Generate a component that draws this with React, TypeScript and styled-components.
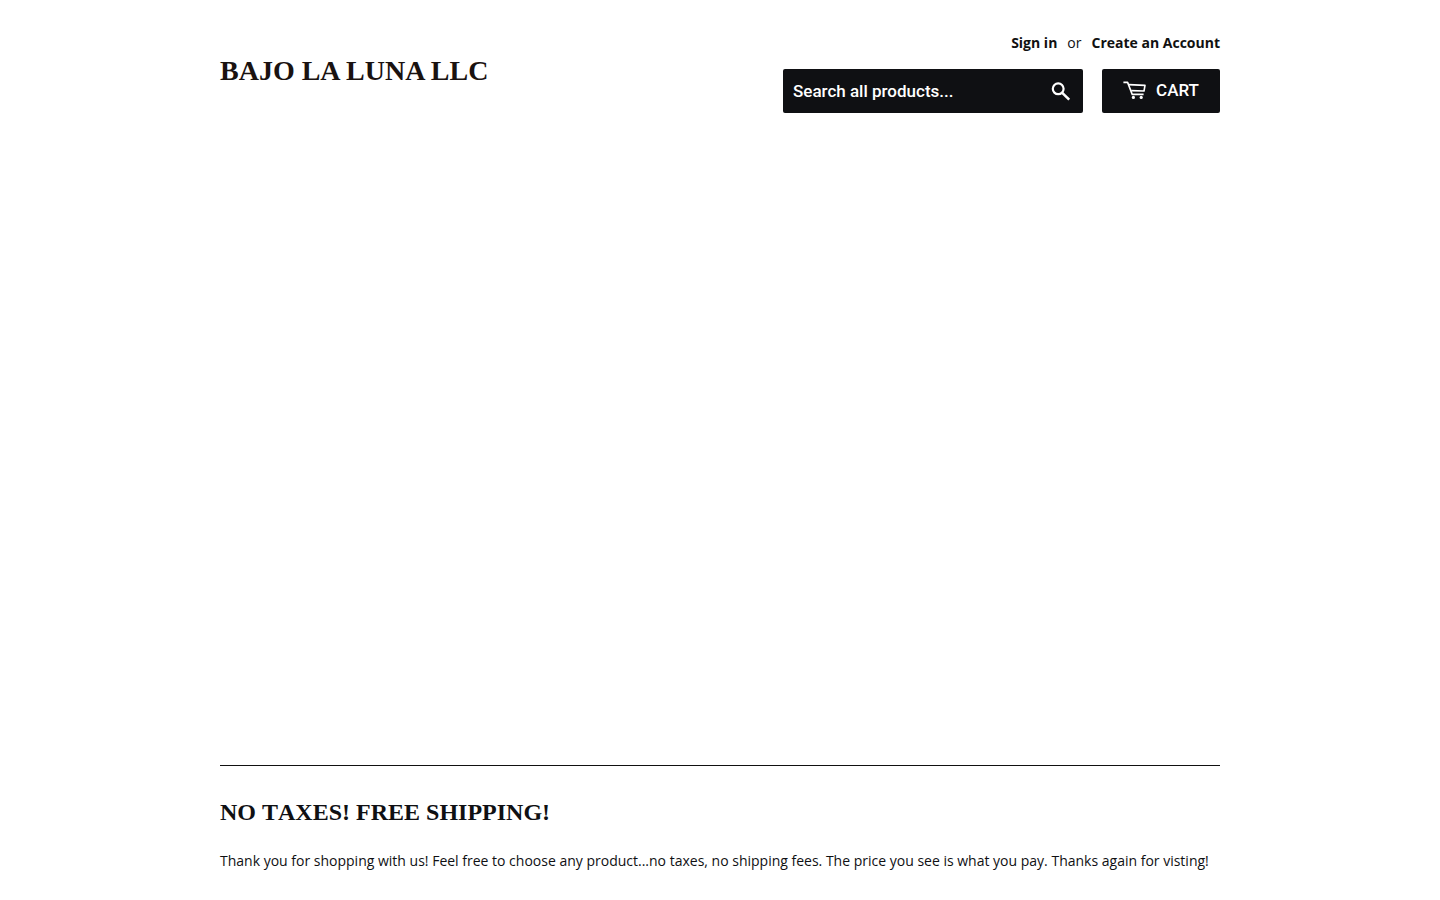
import React from "react";
import styled, { createGlobalStyle } from "styled-components";

const GlobalStyle = createGlobalStyle`
  *, *::before, *::after { box-sizing: border-box; }
  body {
    margin: 0;
    background: #fff;
    color: #0f1013;
    font-family: "Open Sans", "Noto Sans", sans-serif;
    font-size: 14px;
    line-height: 22px;
  }
`;

const Page = styled.div`
  max-width: 1040px;
  margin: 0 auto;
  padding: 0 20px;
`;

const Header = styled.header`
  display: flex;
  flex-wrap: wrap;
  align-items: center;
  justify-content: space-between;
  gap: 16px;
  padding: 30px 0;
`;

const SiteName = styled.h1`
  margin: 0;
  padding-bottom: 2px;
  font: bold 28px/32px "Liberation Serif", serif;
  text-transform: uppercase;

  a {
    color: #1a1210;
    text-decoration: none;
  }
`;

const Tools = styled.div`
  display: flex;
  flex-direction: column;
  align-items: flex-end;
  gap: 14px;
`;

const Account = styled.nav`
  display: flex;
  gap: 10px;
  height: 25px;
  line-height: 26px;
`;

const AccountLink = styled.a`
  color: #111;
  font-weight: 700;
  text-decoration: none;
`;

const Actions = styled.div`
  display: flex;
  gap: 19px;
`;

const SearchForm = styled.form`
  display: flex;
  width: 300px;
  height: 44px;
  border-radius: 2px;
  background: #0f1013;
`;

const SearchInput = styled.input`
  flex: 1;
  min-width: 0;
  padding: 0 10px;
  border: 0;
  background: transparent;
  color: #fff;
  font: 500 17px/20px Roboto, sans-serif;

  &::placeholder {
    color: #fff;
    opacity: 1;
  }
`;

const SearchButton = styled.button`
  display: flex;
  align-items: center;
  justify-content: center;
  width: 44px;
  padding: 0;
  border: 0;
  background: transparent;
  color: #fff;
  cursor: pointer;
`;

const CartLink = styled.a`
  display: flex;
  align-items: center;
  justify-content: center;
  gap: 9px;
  width: 118px;
  height: 44px;
  padding-bottom: 2px;
  border-radius: 2px;
  background: #0f1013;
  color: #fff;
  font: 500 17px/20px Roboto, sans-serif;
  text-decoration: none;
`;

const Slideshow = styled.section`
  min-height: 622px;
`;

const Divider = styled.hr`
  margin: 0;
  border: 0;
  border-top: 1px solid #111;
`;

const Message = styled.section`
  padding: 30px 0;
`;

const MessageTitle = styled.h2`
  margin: 0 0 22px;
  font: bold 24px/32px "Liberation Serif", serif;
  font-kerning: none;
`;

const MessageText = styled.p`
  margin: 0;
`;

const SearchIcon = () => (
  <svg width="20" height="20" viewBox="0 0 20 20" fill="none" stroke="currentColor" aria-hidden="true">
    <circle cx="7.2" cy="7.8" r="5.4" strokeWidth="2.2" />
    <path d="M11 11.6 18.2 18.6" strokeWidth="2.6" />
  </svg>
);

const CartIcon = () => (
  <svg width="24" height="20" viewBox="0 0 24 20" fill="none" stroke="currentColor" aria-hidden="true">
    <path d="M.4 2.4h4.2l4.6 12h11.4" strokeWidth="1.6" strokeLinejoin="round" />
    <path d="M5.6 4.6 22 5.4 21 11 8.2 10.6" strokeWidth="1.6" strokeLinejoin="round" />
    <circle cx="10.4" cy="17.4" r="1.6" fill="currentColor" stroke="none" />
    <circle cx="18.2" cy="17.4" r="1.6" fill="currentColor" stroke="none" />
  </svg>
);

export default function App() {
  return (
    <>
      <GlobalStyle />
      <Page>
        <Header>
          <SiteName>
            <a href="#home">Bajo La Luna LLC</a>
          </SiteName>
          <Tools>
            <Account aria-label="Account">
              <AccountLink href="#login">Sign in</AccountLink>
              <span>or</span>
              <AccountLink href="#register">Create an Account</AccountLink>
            </Account>
            <Actions>
              <SearchForm role="search">
                <SearchInput type="search" aria-label="Search all products" placeholder="Search all products..." />
                <SearchButton type="submit" aria-label="Search">
                  <SearchIcon />
                </SearchButton>
              </SearchForm>
              <CartLink href="#cart">
                <CartIcon />
                <span>CART</span>
              </CartLink>
            </Actions>
          </Tools>
        </Header>
        <main>
          <Slideshow aria-label="Featured" />
          <Divider />
          <Message>
            <MessageTitle>NO TAXES! FREE SHIPPING!</MessageTitle>
            <MessageText>
              Thank you for shopping with us! Feel free to choose any product...no taxes, no shipping fees. The
              price you see is what you pay. Thanks again for visting!
            </MessageText>
          </Message>
        </main>
      </Page>
    </>
  );
}
